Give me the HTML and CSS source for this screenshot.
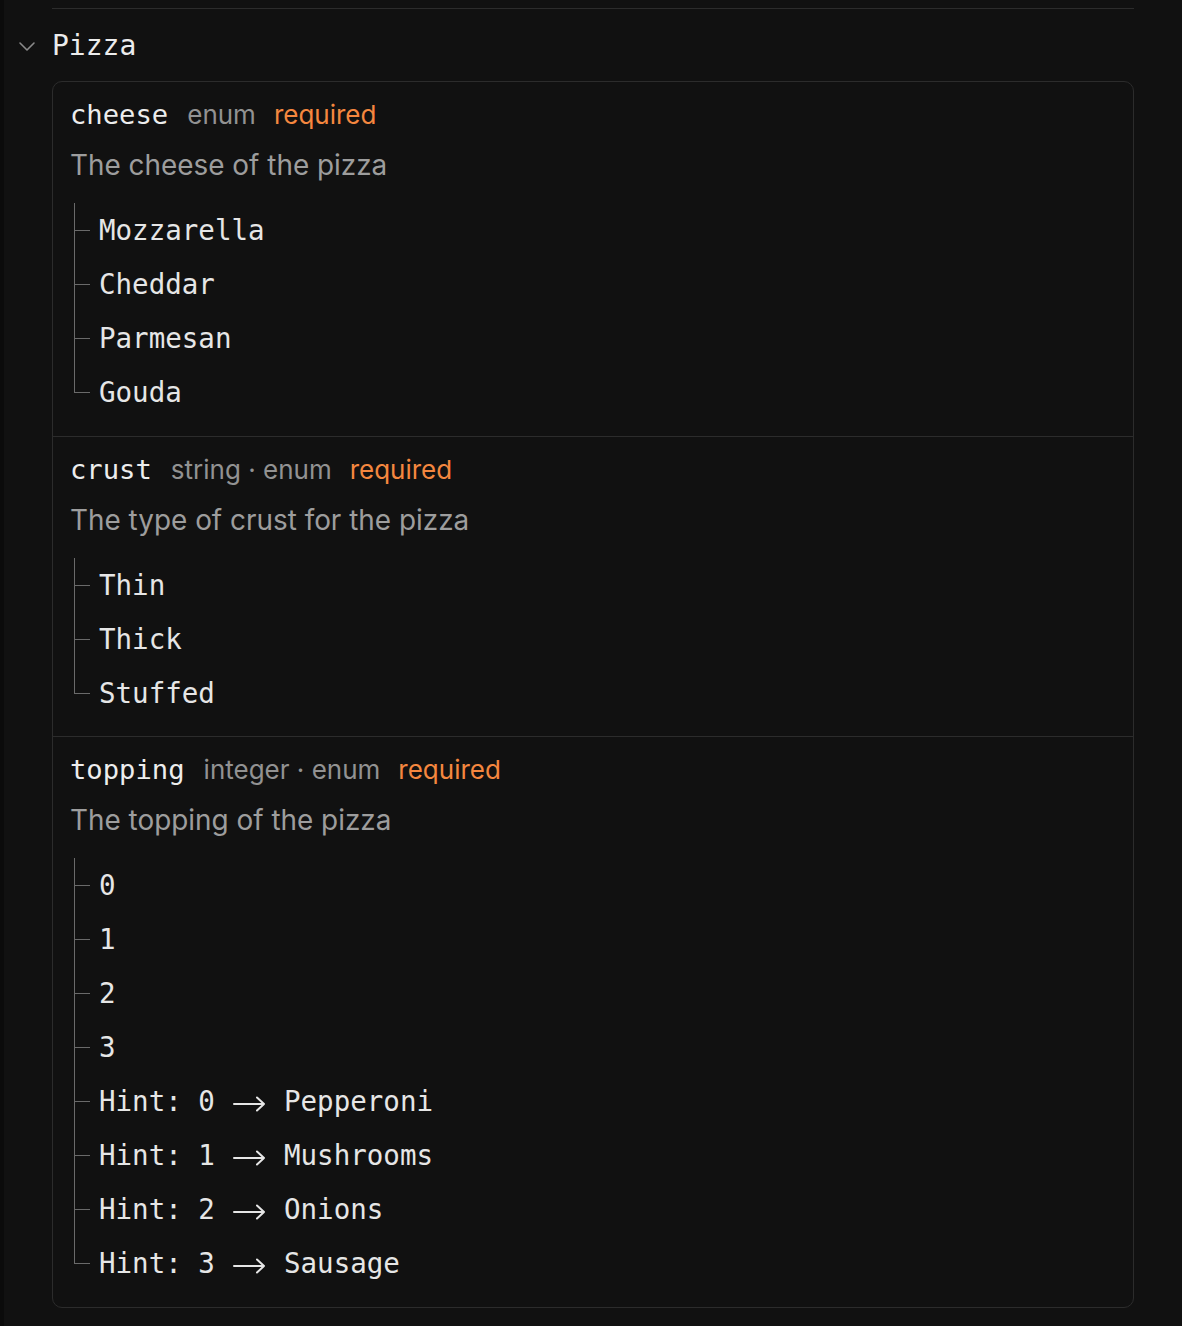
FILE: index.html
```html
<!DOCTYPE html>
<html>
<head>
<meta charset="utf-8">
<link rel="stylesheet" href="styles.css">
</head>
<body>
<div class="page">
  <div class="top-rule"></div>
  <div class="group">
    <div class="group-head">
      <svg class="chev" width="18" height="12" viewBox="0 0 18 12"><path d="M2 3 L9 10 L16 3" fill="none" stroke="#8a8a8a" stroke-width="1.6" stroke-linecap="round" stroke-linejoin="round"/></svg>
      <span class="group-title">Pizza</span>
    </div>
    <div class="card">
      <div class="field">
        <div class="field-head"><span class="fname">cheese</span><span class="ftype">enum</span><span class="freq">required</span></div>
        <div class="fdesc">The cheese of the pizza</div>
        <ul class="tree">
          <li>Mozzarella</li>
          <li>Cheddar</li>
          <li>Parmesan</li>
          <li>Gouda</li>
        </ul>
      </div>
      <div class="field">
        <div class="field-head"><span class="fname">crust</span><span class="ftype">string · enum</span><span class="freq">required</span></div>
        <div class="fdesc">The type of crust for the pizza</div>
        <ul class="tree">
          <li>Thin</li>
          <li>Thick</li>
          <li>Stuffed</li>
        </ul>
      </div>
      <div class="field">
        <div class="field-head"><span class="fname">topping</span><span class="ftype">integer · enum</span><span class="freq">required</span></div>
        <div class="fdesc">The topping of the pizza</div>
        <ul class="tree">
          <li>0</li>
          <li>1</li>
          <li>2</li>
          <li>3</li>
          <li>Hint: 0 <svg class="arrow" viewBox="0 0 36 16" aria-label="to"><path d="M3 8 H33 M26 1.5 L33 8 L26 14.5" fill="none" stroke="#e6e6e6" stroke-width="2" stroke-linecap="round" stroke-linejoin="round"/></svg> Pepperoni</li>
          <li>Hint: 1 <svg class="arrow" viewBox="0 0 36 16" aria-label="to"><path d="M3 8 H33 M26 1.5 L33 8 L26 14.5" fill="none" stroke="#e6e6e6" stroke-width="2" stroke-linecap="round" stroke-linejoin="round"/></svg> Mushrooms</li>
          <li>Hint: 2 <svg class="arrow" viewBox="0 0 36 16" aria-label="to"><path d="M3 8 H33 M26 1.5 L33 8 L26 14.5" fill="none" stroke="#e6e6e6" stroke-width="2" stroke-linecap="round" stroke-linejoin="round"/></svg> Onions</li>
          <li>Hint: 3 <svg class="arrow" viewBox="0 0 36 16" aria-label="to"><path d="M3 8 H33 M26 1.5 L33 8 L26 14.5" fill="none" stroke="#e6e6e6" stroke-width="2" stroke-linecap="round" stroke-linejoin="round"/></svg> Sausage</li>
        </ul>
      </div>
    </div>
  </div>
</div>
</body>
</html>
```

FILE: styles.css
```css
html, body {
  margin: 0;
  padding: 0;
  background: #111111;
}
body {
  min-height: 1326px;
  border-left: 4px solid #0b0b0b;
  box-sizing: border-box;
}
.page {
  padding: 8px 48px 0 48px;
}
.top-rule {
  height: 1px;
  background: #2c2c2c;
}
.group-head {
  display: flex;
  align-items: center;
  height: 72px;
  margin-left: -34px;
}
.chev {
  display: block;
  width: 18px;
  height: 12px;
  margin-right: 16px;
  margin-top: 2px;
}
.group-title {
  font-family: "DejaVu Sans Mono", monospace;
  font-size: 28px;
  color: #ececec;
  line-height: 36px;
  margin-top: 2px;
}
.card {
  border: 1px solid #2c2c2c;
  border-radius: 10px;
}
.field {
  padding: 15px 17px 16.6px 17px;
  border-top: 1px solid #2c2c2c;
}
.field:first-child {
  border-top: none;
}
.field-head {
  display: flex;
  align-items: baseline;
  height: 36px;
  line-height: 36px;
}
.fname {
  font-family: "DejaVu Sans Mono", monospace;
  font-size: 27.2px;
  color: #ededed;
  margin-right: 19px;
}
.ftype {
  font-family: Inter, "Noto Sans", sans-serif;
  font-size: 26px;
  color: #929292;
  margin-right: 18px;
}
.freq {
  font-family: Inter, "Noto Sans", sans-serif;
  font-size: 26px;
  color: #f5873f;
}
.fdesc {
  font-family: Inter, "Noto Sans", sans-serif;
  font-size: 27.9px;
  color: #9d9d9d;
  line-height: 36px;
  margin-top: 14px;
}
.tree {
  list-style: none;
  margin: 20px 0 0 4px;
  padding: 0;
}
.tree li {
  position: relative;
  height: 54px;
  line-height: 54px;
  padding-left: 25px;
  font-family: "DejaVu Sans Mono", monospace;
  font-size: 27.5px;
  color: #e6e6e6;
  white-space: pre;
}
.tree li::before {
  content: "";
  position: absolute;
  left: 0;
  top: 0;
  bottom: 0;
  border-left: 1px solid #6a6a6a;
}
.tree li:last-child::before {
  bottom: 50%;
}
.tree li::after {
  content: "";
  position: absolute;
  left: 0;
  top: 50%;
  width: 16px;
  border-top: 1px solid #6a6a6a;
}
.arrow {
  display: inline-block;
  width: 36px;
  height: 16px;
  vertical-align: -1px;
}
```
